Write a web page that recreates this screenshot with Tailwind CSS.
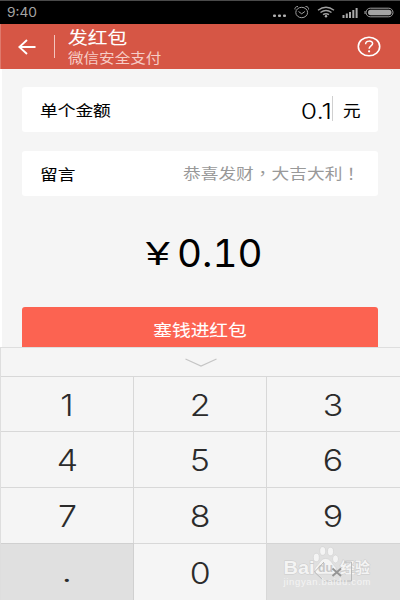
<!DOCTYPE html>
<html lang="zh-CN">
<head>
<meta charset="utf-8">
<title>发红包</title>
<script src="https://cdn.jsdelivr.net/npm/@tailwindcss/browser@4"></script>
</head>
<body class="w-[400px] h-[600px] overflow-hidden bg-[#f5f5f5] font-['Liberation_Sans','Noto_Sans_CJK_SC',sans-serif]">
<div class="flex flex-col w-[400px] h-[600px] overflow-hidden">
  <div class="h-6 shrink-0 bg-black border-t border-[#4a4a4a] flex items-center justify-between pl-[7px] pr-[6px] text-[#a5a5a5]">
    <span class="text-[12.5px] leading-none pt-px origin-left scale-x-[1.1] font-['Inter']">9:40</span>
    <svg width="123" height="22" viewBox="271 1.500 123 22" fill="none" stroke="#a0a0a0">
      <g fill="#b0b0b0" stroke="none"><rect x="273" y="14" width="3" height="2.500" rx="1"/><rect x="278" y="14" width="3" height="2.500" rx="1"/><rect x="283" y="14" width="3" height="2.500" rx="1"/></g>
      <ellipse cx="301.700" cy="12" rx="5.900" ry="5.200"/><path d="M298.500 11l3.200 2.300 3.200-2.300M295 9c-.5-1.500.8-3.200 3-3M308.500 9c.5-1.500-.8-3.200-3-3"/>
      <path d="M318 9.800q8-6 16 0M320.500 12q5.500-4 11 0M323 14.200q3-2 6 0" stroke-width="1.400"/><circle cx="326" cy="15.700" r="1.200" fill="#b0b0b0" stroke="none"/>
      <g fill="#a8a8a8" stroke="none"><rect x="342.500" y="14.500" width="2" height="3"/><rect x="345.800" y="13" width="2" height="4.500"/><rect x="349" y="11.500" width="2" height="6"/><rect x="352.300" y="9.500" width="2" height="8"/><rect x="355.600" y="7.500" width="2" height="10"/></g>
      <rect x="366" y="7.700" width="27" height="8.600" rx="4.300"/><rect x="368" y="9.300" width="23.500" height="5.400" rx="2.700" fill="#a5a5a5" stroke="none"/><path d="M365 10.500v3"/>
    </svg>
  </div>
  <header class="h-[45px] shrink-0 bg-[#d65645] border-l border-[#df7a6d] flex items-center pl-[17px] pr-[19px] text-white">
    <svg width="18" height="16" viewBox="0 0 18 16" fill="none" stroke="#fff" stroke-width="1.900"><path d="M17.500 8H1.500M9 1L1.300 8L9 15"/></svg>
    <div class="w-px h-[23px] bg-[#f3c5be] ml-[18px] mr-[13px]"></div>
    <div class="flex-1 flex flex-col pt-[3px]">
      <h1 class="text-[17px] leading-[20px] font-normal [-webkit-text-stroke:0.1px_#fff] origin-left scale-x-[1.16] whitespace-nowrap">发红包</h1>
      <p class="text-[13.3px] leading-[19px] origin-left scale-x-[1.17] whitespace-nowrap text-[#f6cdc7]">微信安全支付</p>
    </div>
    <svg width="24" height="21" viewBox="0 0 24 21" fill="none" stroke="#fff" stroke-width="1.600"><ellipse cx="12" cy="10.500" rx="10.700" ry="9.300"/><path d="M8.600 8.200c0-4 7-4 7-.6 0 2.300-3.500 2.400-3.500 5.200" stroke-width="1.500"/><circle cx="12.100" cy="15.300" r="1.100" fill="#fff" stroke="none"/></svg>
  </header>
  <main class="h-[278px] shrink-0 overflow-hidden border-l-2 border-white bg-[#f5f5f5] pl-5 pr-[22px] pt-[18px] flex flex-col">
    <div class="h-[45px] shrink-0 rounded-[3px] bg-white flex items-center pl-[18px] pr-[18px] text-black">
      <span class="text-[15px] leading-none pt-[2px] [-webkit-text-stroke:0.1px_#000] origin-left scale-x-[1.18] whitespace-nowrap">单个金额</span>
      <span class="ml-auto text-[22px] leading-none pt-[2px] origin-right scale-x-[1.2] font-['Inter'] font-[350]">0.1</span>
      <span class="w-px h-[25px] bg-[#d0d0d0] mr-[10px] -mt-[2px]"></span>
      <span class="w-[17px] text-[15px] leading-none pt-[2px] [-webkit-text-stroke:0.1px_#000] origin-left scale-x-[1.17]">元</span>
    </div>
    <div class="h-[45px] shrink-0 mt-[19px] rounded-[3px] bg-white flex items-center justify-between pl-[18px] pr-[18px]">
      <span class="text-[15px] leading-none pt-px [-webkit-text-stroke:0.1px_#000] origin-left scale-x-[1.18] text-black">留言</span>
      <span class="text-[15px] leading-[15px] h-[17px] origin-right scale-x-[1.18] whitespace-nowrap text-[#999]">恭喜发财<span lang="zh-TW" class="font-['Noto_Sans_CJK_TC']">，</span>大吉大利<span lang="zh-TW" class="font-['Noto_Sans_CJK_TC']">！</span></span>
    </div>
    <div class="h-[111px] shrink-0 flex items-center text-black pl-[124px] pt-[5px]">
      <span class="w-[31px] text-[34px] leading-none -mt-[2px] [-webkit-text-stroke:0.1px_#000] origin-left scale-x-[1.25]">¥</span>
      <span class="text-[37.5px] leading-none origin-left scale-x-[1.03] font-['Inter'] tabular-nums font-[400]">0.10</span>
    </div>
    <div class="h-[45px] shrink-0 rounded-[3px] bg-[#fc6351] flex items-center justify-center text-white">
      <span class="text-[16px] leading-none pt-[2px] [-webkit-text-stroke:0.1px_#fff] scale-x-[1.17]">塞钱进红包</span>
    </div>
  </main>
  <section class="h-[253px] shrink-0 bg-[#f5f5f5] border-t border-l border-[#dedede] flex flex-col">
    <div class="h-7 shrink-0 flex items-center justify-center">
      <svg width="32" height="9" viewBox="0 0 32 9" fill="none" stroke="#c5c5c5" stroke-width="1.200"><path d="M.5 1L16 8L31.500 1"/></svg>
    </div>
    <div class="flex-1 grid grid-cols-[133px_133px_133px] grid-rows-[55px_56px_56px_57px] text-[30px] leading-none font-[350] font-['Inter'] text-[#2b2b2b]">
      <div class="border-t border-r border-[#d8d8d8] flex items-center justify-center pt-px"><span class="scale-x-[1.13] -ml-px">1</span></div>
      <div class="border-t border-r border-[#d8d8d8] flex items-center justify-center pt-px"><span class="scale-x-[1.13]">2</span></div>
      <div class="border-t border-[#d8d8d8] flex items-center justify-center pt-px"><span class="scale-x-[1.13]">3</span></div>
      <div class="border-t border-r border-[#d8d8d8] flex items-center justify-center pt-px"><span class="scale-x-[1.13]">4</span></div>
      <div class="border-t border-r border-[#d8d8d8] flex items-center justify-center pt-px"><span class="scale-x-[1.13]">5</span></div>
      <div class="border-t border-[#d8d8d8] flex items-center justify-center pt-px"><span class="scale-x-[1.13]">6</span></div>
      <div class="border-t border-r border-[#d8d8d8] flex items-center justify-center pt-px"><span class="scale-x-[1.13]">7</span></div>
      <div class="border-t border-r border-[#d8d8d8] flex items-center justify-center pt-px"><span class="scale-x-[1.13]">8</span></div>
      <div class="border-t border-[#d8d8d8] flex items-center justify-center pt-px"><span class="scale-x-[1.13]">9</span></div>
      <div class="border-t border-r border-[#d0d0d0] bg-[#e0e0e0] flex items-center justify-center"><span class="scale-x-[1.2] font-normal font-['Roboto']">.</span></div>
      <div class="border-t border-r border-[#d8d8d8] flex items-center justify-center pt-px"><span class="scale-x-[1.13]">0</span></div>
      <div class="border-t border-[#d4d4d4] bg-[#e0e0e0]">
        <svg width="133" height="56" viewBox="267 544 133 56" fill="none">
          <g fill="#f4f4f4" stroke="#cfcfcf" stroke-width=".6">
            <ellipse cx="316.300" cy="557.500" rx="3" ry="4.200"/><ellipse cx="322.700" cy="551" rx="3" ry="4.300"/><ellipse cx="330.500" cy="551.500" rx="3" ry="4.300"/><ellipse cx="335.500" cy="559" rx="3" ry="4"/>
            <path d="M325.500 558.500c5 0 6 4.500 9 7.500 4 4 1.500 8.500-3 8.300-4-.3-8-.3-12 0-5 .2-6.500-5-2.500-8.500 3-2.800 4-7.300 8.500-7.300Z"/>
          </g>
          <g font-family="'Liberation Sans','Noto Sans CJK SC',sans-serif" fill="#f4f4f4" stroke="#cbcbcb" stroke-width="1" paint-order="stroke" font-weight="700">
            <text x="283.500" y="573.500" font-size="19" textLength="31" lengthAdjust="spacingAndGlyphs">Bai</text>
            <text x="318" y="572" font-size="13" textLength="15" lengthAdjust="spacingAndGlyphs" fill="#c8c8c8" stroke="none">du</text>
            <text x="340" y="573" font-size="14.500" textLength="30" lengthAdjust="spacingAndGlyphs">经验</text>
          </g>
          <path d="M324 562L314.500 572L324 581H351.500V562H344" stroke="#b4b4b4" stroke-width=".9"/>
          <path d="M332.500 568.500L341 576M341 568.500L332.500 576" stroke="#959595" stroke-width="1.900"/>
          <text x="283.500" y="585" font-family="'Liberation Sans',sans-serif" font-size="9.500" font-weight="400" fill="#f4f4f4" textLength="87" lengthAdjust="spacing">jingyan.baidu.com</text>
        </svg>
      </div>
    </div>
  </section>
</div>
</body>
</html>
